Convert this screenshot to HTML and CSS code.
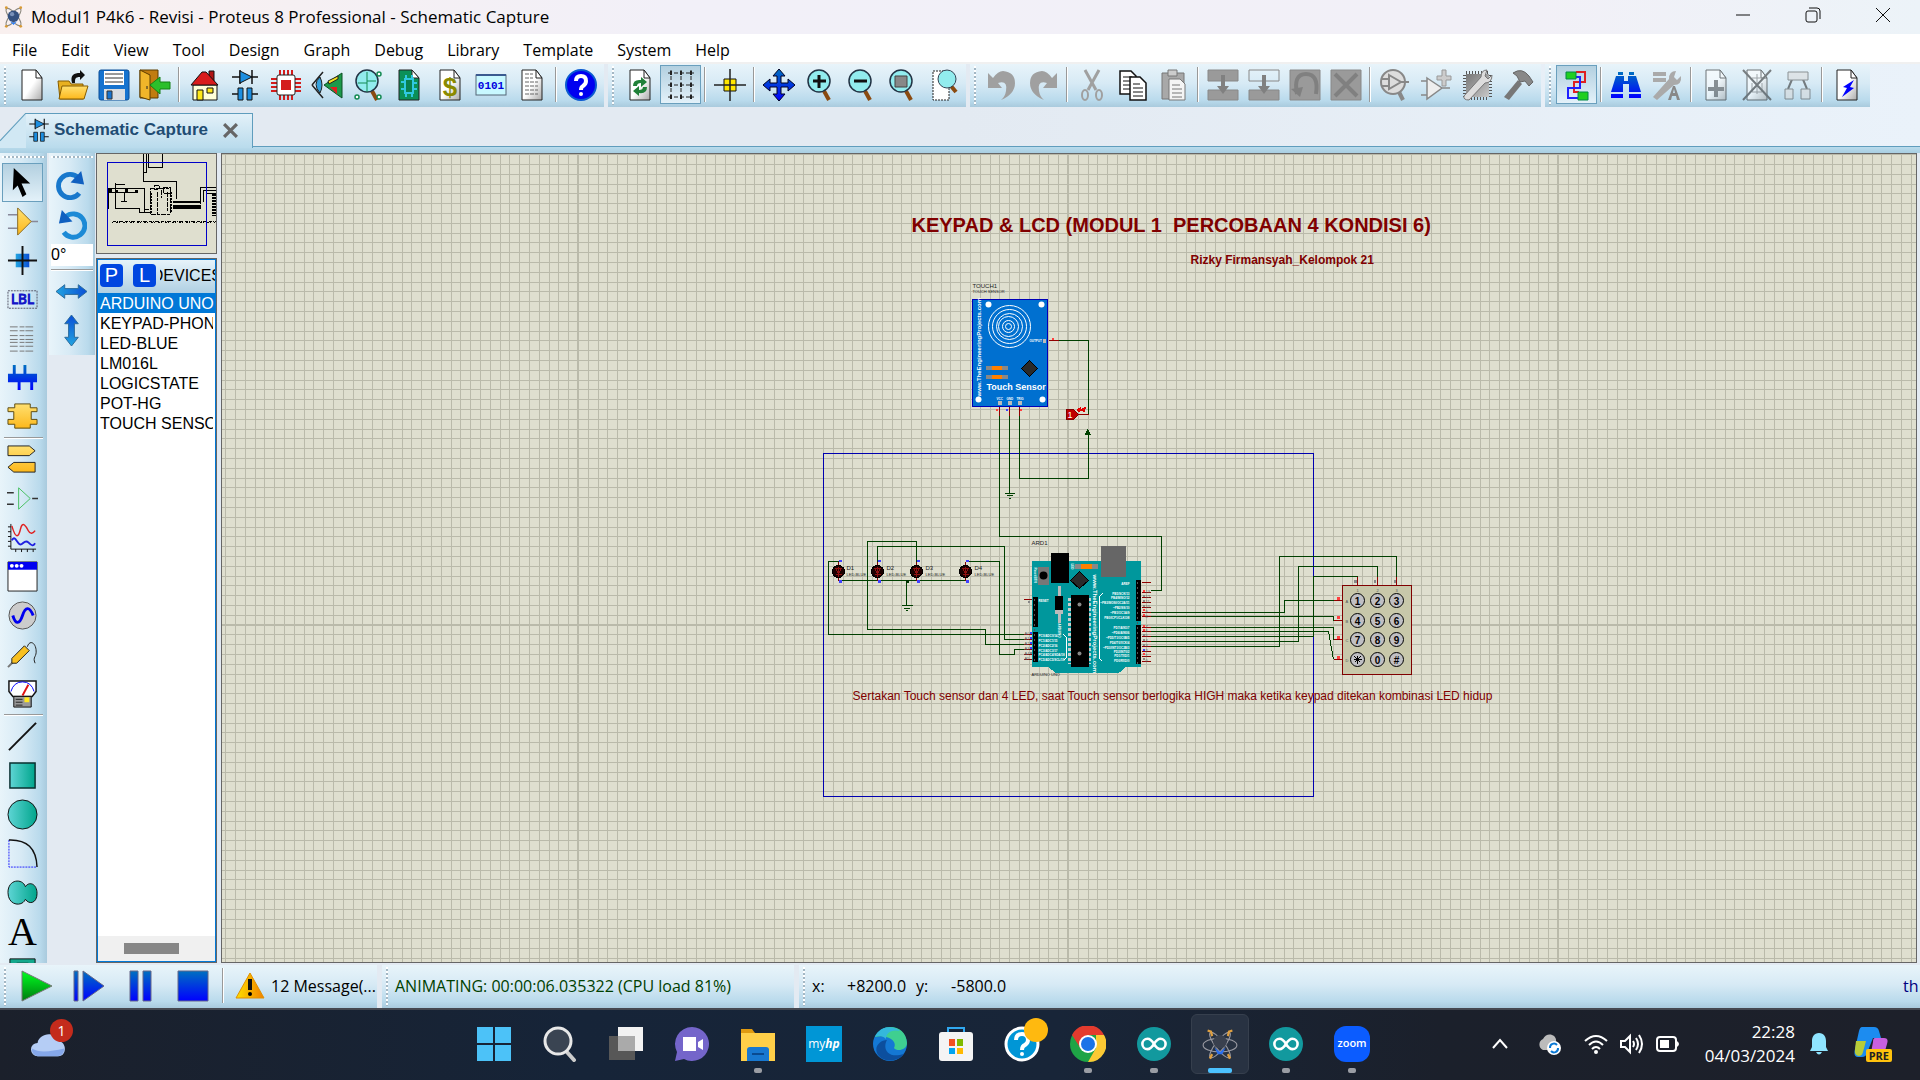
FILE: index.html
```html
<!DOCTYPE html>
<html lang="en">
<head>
<meta charset="utf-8">
<title>Modul1 P4k6 - Revisi - Proteus 8 Professional - Schematic Capture</title>
<link rel="stylesheet" href="styles.css">
</head>
<body>
<svg class="defs" aria-hidden="true">
  <defs>
    <linearGradient id="g-blue" x1="0" y1="0" x2="0" y2="1"><stop offset="0" stop-color="#0070c0"/><stop offset="1" stop-color="#0000ff"/></linearGradient>
    <linearGradient id="g-sky" x1="0" y1="0" x2="1" y2="0"><stop offset="0" stop-color="#22a4e0"/><stop offset="1" stop-color="#0a4fd6"/></linearGradient>
    <linearGradient id="g-yel" x1="0" y1="0" x2="0" y2="1"><stop offset="0" stop-color="#ffe070"/><stop offset="1" stop-color="#fcb81c"/></linearGradient>
    <linearGradient id="g-teal" x1="0" y1="0" x2="1" y2="0"><stop offset="0" stop-color="#5fd5d5"/><stop offset="1" stop-color="#00a58c"/></linearGradient>
    <linearGradient id="g-grn" x1="0" y1="0" x2="0" y2="1"><stop offset="0" stop-color="#00ff20"/><stop offset="1" stop-color="#007a10"/></linearGradient>
    <linearGradient id="g-page" x1="0" y1="0" x2="1" y2="1"><stop offset=".5" stop-color="#fff"/><stop offset="1" stop-color="#aaa"/></linearGradient>
    <linearGradient id="g-gray" x1="0" y1="0" x2="1" y2="1"><stop offset="0" stop-color="#777"/><stop offset="1" stop-color="#c8c8c8"/></linearGradient>
    <linearGradient id="g-warn" x1="0" y1="0" x2="1" y2="0"><stop offset="0" stop-color="#ffe000"/><stop offset="1" stop-color="#f08000"/></linearGradient>
    <symbol id="i-page" viewBox="0 0 32 32"><path d="M6 1h14l6 8v22H6z" fill="url(#g-page)" stroke="#222"/><path d="M20 1v8h6z" fill="#fff" stroke="#222"/></symbol>
    <symbol id="i-schem" viewBox="0 0 32 32"><path d="M3 8h26M11 1v14M23 1v14M3 25h9M20 25h9" stroke="#111" stroke-width="1.5"/><path d="M11 2l12 6-12 6z" fill="#1c8ee0" stroke="#111"/><path d="M9 19h5v12H9zM18 19h5v12h-5z" fill="#1c8ee0" stroke="#111"/></symbol>
    <symbol id="i-glass" viewBox="0 0 32 32"><path d="M20 22l5 9" stroke="#8a4a10" stroke-width="4"/><circle cx="15" cy="12" r="11" fill="#92ecee" stroke="#234" stroke-width="1.5"/></symbol>
    <symbol id="i-proteus" viewBox="0 0 32 32"><g fill="none" stroke-width="1.5"><ellipse cx="16" cy="16" rx="15" ry="5" transform="rotate(50 16 16)" stroke="#8d8a80"/><ellipse cx="16" cy="16" rx="15" ry="5" transform="rotate(-50 16 16)" stroke="#8d8a80"/></g><circle cx="16" cy="15" r="8" fill="#34507e"/><circle cx="14" cy="12" r="3" fill="#7890b8"/><path d="M11 22l5 5 5-5-5 2z" fill="#2b80ff"/><g fill="#d79a35"><circle cx="6" cy="3" r="2"/><circle cx="26" cy="3" r="2"/><circle cx="6" cy="29" r="2"/><circle cx="26" cy="29" r="2"/></g></symbol>
    <symbol id="i-orbit" viewBox="0 0 32 32"><g fill="none" stroke="#9a9aa2"><ellipse cx="16" cy="17" rx="15" ry="6"/><ellipse cx="16" cy="17" rx="14" ry="4" transform="rotate(52 16 17)"/><ellipse cx="16" cy="17" rx="14" ry="4" transform="rotate(-52 16 17)"/></g><circle cx="16" cy="14" r="6" fill="#39404e"/><path d="M11 19l5 4 5-4-3 6h-4z" fill="#2b70f0"/><path d="M5 4l3 1 1 4M27 4l-3 1-1 4M7 29l2-4M25 29l-2-4" stroke="#e0a040" stroke-width="2" fill="none"/></symbol>
    <symbol id="i-arduino" viewBox="0 0 36 36"><circle cx="18" cy="18" r="17" fill="#12999e"/><path d="M18 18c-3-5-5-6-7.500-6a6 6 0 0 0 0 12c3 0 5-2 7.500-6s5-6 7.500-6a6 6 0 0 1 0 12c-3 0-5-2-7.500-6z" transform="translate(2.500 2.500) scale(.86)" fill="none" stroke="#fff" stroke-width="3"/></symbol>
    <symbol id="i-led" viewBox="-7 -12 14 24" overflow="visible"><path d="M0-10V9" stroke="#800000"/><circle r="6" fill="#1c0000" stroke="#000"/><path d="M-3-3h6l-3 5zM-3 3h6M0-5v10" stroke="#901010" fill="none"/><path d="M0-12h3v2H0zM0 8h3v3H0z" fill="#4040ff"/></symbol>
  </defs>
</svg>

<div class="app">
  <header class="titlebar">
    <svg class="logo" viewBox="0 0 32 32"><use href="#i-proteus"/></svg>
    <h1>Modul1 P4k6 - Revisi - Proteus 8 Professional - Schematic Capture</h1>
    <div class="winctl">
      <button aria-label="Minimize"><svg viewBox="0 0 16 16"><path d="M1 8h14"/></svg></button>
      <button aria-label="Restore"><svg viewBox="0 0 16 16"><rect x="1" y="4" width="11" height="11" rx="2"/><path d="M4 1h8q3 0 3 3v8"/></svg></button>
      <button aria-label="Close"><svg viewBox="0 0 16 16"><path d="M1 1l14 14M15 1L1 15"/></svg></button>
    </div>
  </header>

  <nav class="menubar">
    <button>File</button><button>Edit</button><button>View</button><button>Tool</button><button>Design</button><button>Graph</button><button>Debug</button><button>Library</button><button>Template</button><button>System</button><button>Help</button>
  </nav>

  <div class="toolbar">
    <div class="group">
      <button aria-label="New"><svg viewBox="0 0 32 32"><use href="#i-page"/></svg></button>
      <button aria-label="Open"><svg viewBox="0 0 32 32"><path d="M1 12h11l2 3h12v15H3z" fill="#e8b020" stroke="#865c00"/><path d="M5 17h26l-4 13H2z" fill="url(#g-yel)" stroke="#865c00"/><path d="M15 14c-2-8 2-10 8-10V1l5 5-5 5V8c-5 0-5 2-5 6z" fill="#111"/></svg></button>
      <button aria-label="Save"><svg viewBox="0 0 32 32"><rect x="1" y="1" width="30" height="30" rx="2" fill="#1673cf" stroke="#0a4c96"/><path d="M6 2h20v14H6z" fill="#fff"/><path d="M7 5h18M7 9h18M7 13h18" stroke="#333"/><path d="M6 20h21v11H6z" fill="#d9dde2"/><path d="M9 22h5v8H9z" fill="#1673cf" stroke="#333"/></svg></button>
      <button aria-label="Exit"><svg viewBox="0 0 32 32"><path d="M1 1h18v28H1z" fill="#c07c10" stroke="#5d3c00"/><path d="M1 1l10 5v25L1 28z" fill="#f0b52a" stroke="#5d3c00"/><path d="M8 17v3" stroke="#222"/><path d="M11 16l10-8v5h10v7H21v5z" fill="#2bbf2b" stroke="#158015"/></svg></button>
      <i class="sep"></i>
      <button aria-label="Home"><svg viewBox="0 0 32 32"><path d="M21 2h5v13h-5z" fill="#b01414" stroke="#111"/><path d="M5 16h24v15H5z" fill="#ffffd8" stroke="#111"/><path d="M3 16L14 3l4 0 12 13z" fill="#d81c1c" stroke="#111"/><path d="M9 21h6v10H9zM19 19h6v5h-6z" fill="#ffe818" stroke="#111"/></svg></button>
      <button aria-label="Schematic"><svg viewBox="0 0 32 32"><use href="#i-schem"/></svg></button>
      <button aria-label="PCB"><svg viewBox="0 0 32 32"><path d="M10 1v30M14 1v30M18 1v30M22 1v30M1 10h30M1 14h30M1 18h30M1 22h30" stroke="#d41c1c" stroke-width="2"/><rect x="7" y="6" width="18" height="20" rx="2" fill="#fff" stroke="#222"/><path d="M11 11h10v10H11z" fill="#d41c1c"/></svg></button>
      <button aria-label="3D view"><svg viewBox="0 0 32 32"><path d="M13 16L31 4v25z" fill="#1d9a4a" stroke="#0c5024"/><path d="M17 12l10-5v3l-9 5z" fill="#f4e020" stroke="#222"/><path d="M19 18l7 0v7z" fill="#e02020"/><path d="M1 16L12 3M1 16l11 13" stroke="#222" stroke-width="1.500" fill="none"/><path d="M9 8q-8 7 0 16 4-8 0-16z" fill="#36a2de" stroke="#222"/></svg></button>
      <button aria-label="Gerber"><svg viewBox="0 0 32 32"><use href="#i-glass"/><path d="M6 14h9V3M15 14v9M15 12h9" stroke="#138a52" fill="none"/><g fill="#fff" stroke="#138a52" stroke-width="1.500"><circle cx="27" cy="5" r="2"/><circle cx="5" cy="28" r="2"/><circle cx="27" cy="28" r="2"/></g></svg></button>
      <button aria-label="Design explorer"><svg viewBox="0 0 32 32"><path d="M6 1h13l7 8v22H6z" fill="#0b9058" stroke="#222"/><path d="M19 1v8h7z" fill="#fff" stroke="#222"/><path d="M12 10h8v14h-8zM13 10V6M19 10V6M13 24v4M19 24v4M12 13H8M12 20H8M20 14h4M20 20h4" fill="#088050" stroke="#30c8e0" stroke-width="2"/></svg></button>
      <button aria-label="Bill of materials"><svg viewBox="0 0 32 32"><use href="#i-page"/><text x="16" y="27" class="bill">$</text></svg></button>
      <button aria-label="Source"><svg viewBox="0 0 32 32"><rect x="1" y="6" width="30" height="20" fill="#c8f8ff" stroke="#567"/><path d="M1 5h30v2H1z" fill="#3a5a90"/><text x="16" y="20" class="code">0101</text></svg></button>
      <button aria-label="Notes"><svg viewBox="0 0 32 32"><use href="#i-page"/><path d="M9 5h8M9 9h8M9 13h13M9 17h13M9 21h13M9 25h13" stroke="#666" stroke-dasharray="4 1"/></svg></button>
      <i class="sep"></i>
      <button aria-label="Help"><svg viewBox="0 0 32 32"><circle cx="16" cy="16" r="15" fill="#0000f0" stroke="#0a5ad0" stroke-width="2"/><path d="M11 12q0-5 5-5t5 5q0 3-3 5-2 1-2 4" fill="none" stroke="#fff" stroke-width="4"/><circle cx="16" cy="25" r="2" fill="#fff"/></svg></button>
    </div>
    <div class="group">
      <button aria-label="Redraw"><svg viewBox="0 0 32 32"><use href="#i-page"/><path d="M9 17q0-7 8-6V8l6 5-6 5v-4q-4 0-4 3zM23 18q0 7-8 6v3l-6-5 6-5v4q4 0 4-3z" fill="#208038"/></svg></button>
      <button class="on" aria-label="Grid"><svg viewBox="0 0 32 32"><path d="M6 1v30M16 1v30M26 1v30M3 4h26M3 16h26M3 28h26" stroke="#222" stroke-dasharray="4 2"/><path d="M6 2v4M16 2v4M26 2v4M6 14v4M16 14v4M26 14v4M6 26v4M16 26v4M26 26v4" stroke="#222" stroke-width="2"/></svg></button>
      <i class="sep"></i>
      <button aria-label="Origin"><svg viewBox="0 0 32 32"><path d="M10 10h12v12H10z" fill="#ffe600" stroke="#111"/><path d="M0 16h32M16 0v32" stroke="#222" stroke-width="1.500"/></svg></button>
      <i class="sep"></i>
      <button aria-label="Pan"><svg viewBox="0 0 32 32"><path d="M16 0l6 7h-4v7h7v-4l7 6-7 6v-4h-7v7h4l-6 7-6-7h4v-7H7v4l-7-6 7-6v4h7V7h-4z" fill="url(#g-blue)" stroke="#002"/></svg></button>
      <button aria-label="Zoom in"><svg viewBox="0 0 32 32"><use href="#i-glass"/><path d="M9 12h13M15 6v13" stroke="#111" stroke-width="3"/></svg></button>
      <button aria-label="Zoom out"><svg viewBox="0 0 32 32"><use href="#i-glass"/><path d="M9 12h13" stroke="#111" stroke-width="3"/></svg></button>
      <button aria-label="Zoom all"><svg viewBox="0 0 32 32"><use href="#i-glass"/><path d="M9 7h12v11H9z" fill="#888" stroke="#444"/></svg></button>
      <button aria-label="Zoom area"><svg viewBox="0 0 32 32"><path d="M6 2h16v29H6z" fill="#fff" stroke="#222" stroke-dasharray="2 1"/><path d="M24 17l5 6" stroke="#8a4a10" stroke-width="4"/><circle cx="20" cy="10" r="9" fill="#92ecee" stroke="#345"/></svg></button>
    </div>
    <div class="group">
      <button aria-label="Undo"><svg viewBox="0 0 32 32"><path d="M2 4v15h14l-4-5q10-3 8 8-1 6-5 9 14-6 14-17T17 2Q12 2 7 9z" fill="#a0a0a0"/></svg></button>
      <button aria-label="Redo"><svg viewBox="0 0 32 32"><path d="M30 4v15H16l4-5q-10-3-8 8 1 6 5 9Q3 25 3 14T15 2q5 0 10 7z" fill="#a0a0a0"/></svg></button>
      <i class="sep"></i>
      <button aria-label="Cut"><svg viewBox="0 0 32 32" fill="none" stroke="#a0a0a0"><path d="M9 1l11 20M23 1L12 21" stroke-width="3"/><ellipse cx="9" cy="26" rx="3" ry="5" stroke-width="2"/><ellipse cx="23" cy="26" rx="3" ry="5" stroke-width="2"/></svg></button>
      <button aria-label="Copy"><svg viewBox="0 0 32 32"><path d="M3 2h11l5 5v18H3z" fill="#fff" stroke="#111" stroke-width="1.500"/><path d="M6 8h9M6 12h9M6 16h9M6 20h9" stroke="#111"/><path d="M13 8h10l6 6v17H13z" fill="#fff" stroke="#111" stroke-width="1.500"/><path d="M16 15h7M16 19h10M16 23h10M16 27h10" stroke="#111"/></svg></button>
      <button aria-label="Paste"><svg viewBox="0 0 32 32"><path d="M4 4h22v26H4z" fill="#a8a8a8" stroke="#777"/><path d="M10 1h9v6h-9z" fill="#ccc" stroke="#777"/><path d="M11 10h11l5 5v16H11z" fill="#f4f4f4" stroke="#777"/><path d="M14 16h8M14 20h10M14 24h10M14 28h10" stroke="#777"/></svg></button>
      <i class="sep"></i>
      <button aria-label="Block copy"><svg viewBox="0 0 32 32"><path d="M1 1h30v11H1zM1 21h30v10H1z" fill="#9a9a9a" stroke="#888"/><path d="M14 6h4v11h4l-6 8-6-8h4z" fill="#808080"/></svg></button>
      <button aria-label="Block move"><svg viewBox="0 0 32 32"><path d="M1 1h30v11H1z" fill="none" stroke="#888"/><path d="M1 21h30v10H1z" fill="#9a9a9a" stroke="#888"/><path d="M14 6h4v11h4l-6 8-6-8h4z" fill="#808080"/></svg></button>
      <button aria-label="Block rotate"><svg viewBox="0 0 32 32"><path d="M1 1h30v30H1z" fill="#9a9a9a" stroke="#888"/><path d="M8 25q-4-20 9-20t10 20" fill="none" stroke="#808080" stroke-width="4"/><path d="M2 20l9 8 3-10z" fill="#808080"/></svg></button>
      <button aria-label="Block delete"><svg viewBox="0 0 32 32"><path d="M1 1h30v30H1z" fill="#9a9a9a" stroke="#888"/><path d="M5 5l22 22M27 5L5 27" stroke="#808080" stroke-width="4"/></svg></button>
      <i class="sep"></i>
      <button aria-label="Pick parts"><svg viewBox="0 0 32 32" fill="none" stroke="#888" stroke-width="2"><path d="M20 23l4 8" stroke-width="4"/><circle cx="14" cy="13" r="12" fill="#ddd"/><path d="M10 6l12 7-12 7zM2 10h8M2 17h8M22 13h8"/></svg></button>
      <button aria-label="Make device"><svg viewBox="0 0 32 32"><path d="M7 9l15 10L7 30zM1 12h6M1 26h6M22 19h8" fill="#eee" stroke="#888" stroke-width="1.500"/><path d="M22 1h4v6h5v4h-5v6h-4v-6h-5V7h5z" fill="#ccc" stroke="#999"/></svg></button>
      <button aria-label="Packaging"><svg viewBox="0 0 32 32"><path d="M5 5h23v23H5z" fill="none" stroke="#555" stroke-width="6" stroke-dasharray="1 2"/><path d="M5 5h23v23H5z" fill="url(#g-gray)"/><path d="M3 27L20 8q0-7 6-7l-2 6 3 3 4-4q0 8-7 8L8 31q-6 0-5-4z" fill="#ddd" stroke="#777"/></svg></button>
      <button aria-label="Decompose"><svg viewBox="0 0 32 32"><path d="M16 11l4 4L7 31l-5-3z" fill="#777"/><path d="M11 4q9-6 16 3l4 6-4 4-4-5-5 1-3-6z" fill="#888" stroke="#666"/></svg></button>
    </div>
    <div class="group">
      <button class="on" aria-label="Autoroute"><svg viewBox="0 0 32 32"><path d="M15 3h9v10h-11v10h5" fill="none" stroke="#e02020" stroke-width="2"/><path d="M13 8h6v11H7v10h12" fill="none" stroke="#2020ff" stroke-width="2"/><path d="M5 3h10v7H5zM17 23h10v8H17z" fill="#20cf20" stroke="#084"/></svg></button>
      <i class="sep"></i>
      <button aria-label="Find"><svg viewBox="0 0 32 32" fill="url(#g-blue)"><path d="M8 3h5v3H8zM19 3h5v3h-5zM6 7h8v5h4V7h8l5 16H19v-8h-6v8H1zM1 25h12v4H1zM19 25h12v4H19z"/></svg></button>
      <button aria-label="Property tool"><svg viewBox="0 0 32 32"><path d="M2 3h13v4H2zM2 9h13v4H2z" fill="#aaa"/><path d="M2 28L18 10q0-8 7-8l-2 6 3 3 4-4q1 9-7 9L6 31z" fill="#aaa"/><path d="M17 31l5-14h2l5 14h-3l-1-4h-4l-1 4zM22 24h2l-1-4z" fill="#888"/></svg></button>
      <i class="sep"></i>
      <button aria-label="New sheet"><svg class="dim" viewBox="0 0 32 32"><use href="#i-page"/><path d="M16 11v17M8 20h16" stroke="#555" stroke-width="4"/></svg></button>
      <button aria-label="Remove sheet"><svg class="dim" viewBox="0 0 32 32"><use href="#i-page"/><path d="M16 5v20M11 9h10M11 14v9h10v-9" stroke="#777" fill="none"/><path d="M2 1l28 30M30 1L2 31" stroke="#333" stroke-width="2"/></svg></button>
      <button aria-label="Parent sheet"><svg class="dim" viewBox="0 0 32 32"><path d="M11 8L6 20M20 8l5 12" stroke="#333" stroke-width="2"/><path d="M6 3h20v8H6zM3 20h8v10H3zM19 20h9v10h-9z" fill="#ddd" stroke="#555"/></svg></button>
      <i class="sep"></i>
      <button aria-label="Electrical check"><svg viewBox="0 0 32 32"><use href="#i-page"/><path d="M23 11l-11 7 4 1-5 9 12-9-4-1z" fill="#0000ff"/></svg></button>
    </div>
  </div>

  <div class="tabs">
    <svg class="slant" viewBox="0 0 26 34" preserveAspectRatio="none"><path d="M0 27L26 0v34H0z" fill="#d1e8f4"/><path d="M0 27L26 0" stroke="#5f9dbd"/></svg>
    <div class="tab"><svg viewBox="0 0 32 32"><use href="#i-schem"/></svg><span>Schematic Capture</span><button aria-label="Close tab"><svg viewBox="0 0 14 14"><path d="M1 1l12 12M13 1L1 13" stroke="#666" stroke-width="3"/></svg></button></div>
  </div>

  <main class="work">
    <div class="tools modes">
      <button class="on" aria-label="Select"><svg viewBox="0 0 32 32"><path d="M7 1l17 16h-9l5 11-4 3-5-12-5 5z" fill="#000"/></svg></button>
      <button aria-label="Component"><svg viewBox="0 0 32 32"><path d="M1 9h10M1 23h10M25 16h7" stroke="#889" stroke-width="1.500"/><path d="M11 2l14 14-14 14z" fill="url(#g-yel)" stroke="#8a6a20"/></svg></button>
      <button aria-label="Junction"><svg viewBox="0 0 32 32"><path d="M9 9h14v14H9z" fill="url(#g-sky)"/><path d="M1 16h30M16 1v30" stroke="#111" stroke-width="2"/></svg></button>
      <button aria-label="Label"><svg viewBox="0 0 32 32"><path d="M1 7h30v18H1z" fill="none" stroke="#556" stroke-dasharray="2 1"/><text x="16" y="21" class="lbl">LBL</text></svg></button>
      <button aria-label="Script"><svg viewBox="0 0 32 32"><path d="M3 4h26M3 8h26M3 13h26M3 17h26M3 20h26M3 24h26M3 29h26" stroke="#777" stroke-dasharray="8 2 5 1"/></svg></button>
      <button aria-label="Bus"><svg viewBox="0 0 32 32" fill="url(#g-blue)"><path d="M1 12h5V3h3v9h8V3h3v9h11v9h-4v8h-3v-8H14v8h-3v-8H1z"/></svg></button>
      <button aria-label="Subcircuit"><svg viewBox="0 0 32 32"><path d="M8 3h16v4h7v4h-6v8h6v5h-7v4H8v-4H1v-5h6v-8H1V7h7z" fill="url(#g-yel)" stroke="#5d4a10"/></svg></button>
      <i class="sep"></i>
      <button aria-label="Terminals"><svg viewBox="0 0 32 32"><path d="M1 2h22l6 5-6 5H1zM29 19H7l-6 5 6 5h22z" fill="url(#g-yel)" stroke="#222"/></svg></button>
      <button aria-label="Pins"><svg viewBox="0 0 32 32"><path d="M0 10h7M0 22h7M26 16h6" stroke="#333" stroke-width="1.500"/><path d="M12 5l12 11-12 11z" fill="none" stroke="#46c060"/></svg></button>
      <button aria-label="Graph"><svg viewBox="0 0 32 32" fill="none"><path d="M4 2v26h26M1 5h3M1 10h3M1 15h3M1 20h3M1 25h3M9 28v3M15 28v3M21 28v3M27 28v3" stroke="#111"/><path d="M5 4c4 14 7 12 9 3s6-2 8 2 5 3 7 0" stroke="#e02020" stroke-width="1.500"/><path d="M5 19c3-6 5 2 8 4s5-6 9-2 5 4 7 1" stroke="#2020e0" stroke-width="2"/></svg></button>
      <button aria-label="Active popup"><svg viewBox="0 0 32 32"><path d="M1 1h30v30H1z" fill="#fff" stroke="#222"/><path d="M1 1h30v8H1z" fill="#0000f0"/><g fill="#fff"><circle cx="5" cy="5" r="2"/><circle cx="10" cy="5" r="2"/><circle cx="15" cy="5" r="2"/></g></svg></button>
      <button aria-label="Generator"><svg viewBox="0 0 32 32"><circle cx="16" cy="16" r="14" fill="#ccc" stroke="#555"/><path d="M6 16c3 10 7 9 10 0s7-10 11 0" fill="none" stroke="#0000f0" stroke-width="3"/></svg></button>
      <button aria-label="Probe"><svg viewBox="0 0 32 32"><path d="M1 29l5-5" stroke="#777" stroke-width="2"/><path d="M5 20L18 7l5 5L10 25H5z" fill="#f8c020" stroke="#222"/><path d="M21 8c2-7 8-5 9 3s-4 7-1 14" fill="none" stroke="#222"/></svg></button>
      <button aria-label="Instruments"><svg viewBox="0 0 32 32"><path d="M2 3h28v11l-4 5H6l-4-5z" fill="#fff" stroke="#111" stroke-width="1.500"/><path d="M4 14q3-10 12-10t12 10" fill="none" stroke="#0000ff"/><path d="M16 18l6-11" stroke="#e01010" stroke-width="2"/><path d="M7 19h18v11H7z" fill="#999" stroke="#111"/><path d="M18 20h5v5h-5z" fill="#ffe820"/><path d="M9 22h7M9 25h7M9 28h7" stroke="#222"/></svg></button>
      <i class="sep"></i>
      <button aria-label="Line"><svg viewBox="0 0 32 32"><path d="M2 30L30 2" stroke="#111" stroke-width="2"/></svg></button>
      <button aria-label="Box"><svg viewBox="0 0 32 32"><path d="M3 3h26v26H3z" fill="url(#g-teal)" stroke="#0a3030" stroke-width="1.500"/></svg></button>
      <button aria-label="Circle"><svg viewBox="0 0 32 32"><circle cx="16" cy="16" r="15" fill="url(#g-teal)" stroke="#111"/></svg></button>
      <button aria-label="Arc"><svg viewBox="0 0 32 32" fill="none"><path d="M2 2v28h29" stroke="#2020ff" stroke-dasharray="2 1"/><path d="M2 2q28-1 29 28" stroke="#111" stroke-width="1.500"/></svg></button>
      <button aria-label="Path"><svg viewBox="0 0 32 32"><path d="M19 10C16 1 1 2 1 16s15 15 18 7c4 6 12 4 12-6s-8-13-12-7z" fill="url(#g-teal)" stroke="#111"/></svg></button>
      <button class="serif" aria-label="Text">A</button>
      <button aria-label="Symbol"><svg viewBox="0 0 32 32"><path d="M3 4h26v26H3z" fill="#14a88c" stroke="#111"/><path d="M11 9h10v8H11z" fill="none" stroke="#111" stroke-width="2"/></svg></button>
    </div>

    <div class="tools orient">
      <button aria-label="Rotate clockwise"><svg viewBox="0 0 32 32"><path d="M24 24A12 12 0 1 1 23 8" fill="none" stroke="#1878cc" stroke-width="5"/><path d="M26 1l3 14-14-2z" fill="#1060c0"/></svg></button>
      <button aria-label="Rotate anticlockwise"><svg viewBox="0 0 32 32"><path d="M8 24A12 12 0 1 0 10 8" fill="none" stroke="#1c8ad6" stroke-width="5"/><path d="M6 1L3 15l14-2z" fill="#1060c0"/></svg></button>
      <input value="0°" aria-label="Angle">
      <i class="sep"></i>
      <button aria-label="Flip horizontal"><svg viewBox="0 0 32 32"><path d="M0 16l9-7v4h14V9l9 7-9 7v-4H9v4z" fill="url(#g-sky)" stroke="#2a6a9a"/></svg></button>
      <button aria-label="Flip vertical"><svg viewBox="0 0 32 32"><path d="M0 16l9-7v4h14V9l9 7-9 7v-4H9v4z" fill="url(#g-sky)" stroke="#2a6a9a" transform="rotate(-90 16 16)"/></svg></button>
    </div>

    <aside class="side">
      <div class="overview">
        <svg viewBox="0 0 119 99"><g fill="none" stroke="#000" shape-rendering="crispEdges"><path d="M46 0v27h33v18M49 0v18M47 18h3M51 0v13h14V0M11 34h36v21h5M18 30h10M18 29v25h24v4h10M11 34v21M11 38h30M27 39v8M24 47h6M47 50v8h6"/><path d="M76 48h27M76 52h28M76 54h28" stroke-width="2"/><path d="M103 50V33h17M106 48V36h14M109 46v-7h10"/><path d="M53 34h20v26H53zM57 31h5v4h-5zM66 33h7v6h-7zM60 38v22M64 36v8M70 38v20" stroke-dasharray="5 1 3 1"/><path d="M54 39v20M74 38v20" stroke-width="2" stroke-dasharray="2 1"/><path d="M117 40v22" stroke-width="4" stroke-dasharray="2 1"/><path d="M16 67h103" stroke-dasharray="3 1 1 1 4 2"/><path d="M15 68h103" stroke-dasharray="1 3 2 1"/><path d="M12 36h3M18 37h3M28 36h3M38 37h3" stroke-width="3"/></g><path d="M10 8h99v83H10z" fill="none" stroke="#0000c8" shape-rendering="crispEdges"/></svg>
      </div>
      <div class="devices">
        <div class="dev-head"><button>P</button><button>L</button><span>DEVICES</span></div>
        <ul>
          <li class="sel">ARDUINO UNO</li><li>KEYPAD-PHONE</li><li>LED-BLUE</li><li>LM016L</li><li>LOGICSTATE</li><li>POT-HG</li><li>TOUCH SENSOR</li>
        </ul>
        <div class="hscroll"><i></i></div>
      </div>
    </aside>

    <section class="sheet">
      <svg width="100%" height="100%" role="img" aria-label="Schematic">
        <defs>
          <pattern id="grid" x="13" y="30" width="49" height="49" patternUnits="userSpaceOnUse"><path d="M0 0h1v49H0zM10 0h1v49h-1zM20 0h1v49h-1zM29 0h1v49h-1zM39 0h1v49h-1zM0 0h49v1H0zM0 9h49v1H0zM0 19h49v1H0zM0 29h49v1H0zM0 39h49v1H0z" fill="#babaaa"/></pattern>
        </defs>
        <rect width="100%" height="100%" fill="url(#grid)"/>
        <g fill="#babaaa"><rect x="355" width="2" height="100%"/><rect x="845" width="2" height="100%"/><rect x="1335" width="2" height="100%"/><rect y="470" width="100%" height="2"/></g>
        <g transform="translate(-221.500 -153.500)">
          <path class="frame" d="M823 453h490v343H823z"/>
          <g class="wire">
            <path d="M1058 340h30v74M999 415v121h162v54h-11M1009 415v78M1019 415v63h69v-44M1004 493h10M1006 495h6M1008 498h2"/>
            <path d="M838 561h-10v73h195M916 561v-20h-49v88h118v15h38M877 561v-15h127v93h19M965 561h34v93h15v-5h9M838 580h129M906 580v25M901 605h11M903 608h6M905 610h2"/>
            <path d="M1150 612h134v-12h49M1150 616h183v4M1150 627h183v12M1150 631h178l5 28M1150 636h163v-60h44M1150 641h148v-75h79v10M1150 646h129v-90h117v20"/>
          </g>
          <path d="M1087 428l-3 6h6z" fill="#004000"/><path d="M905 579h3v3h-3z" fill="#003000"/>
          <g class="pin">
            <path d="M1048 340h10M999 403v12M1009 403v12M1019 403v12M1078 414h10"/>
            <path d="M1023 599h9M1023 634h9M1023 639h9M1023 644h9M1023 649h9M1023 654h9M1023 659h9"/>
            <path d="M1141 582h9M1141 592h9M1141 597h9M1141 602h9M1141 607h9M1141 612h9M1141 616h9M1141 627h9M1141 631h9M1141 636h9M1141 641h9M1141 646h9M1141 651h9M1141 656h9M1141 661h9"/>
            <path d="M1333 600h9M1333 620h9M1333 639h9M1333 659h9M1357 576v9M1377 576v9M1396 576v9"/>
          </g>
          <text class="ttl" x="911" y="231">KEYPAD &amp; LCD (MODUL 1&#160; PERCOBAAN 4 KONDISI 6)</text>
          <text class="sub" x="1190" y="263">Rizky Firmansyah_Kelompok 21</text>
          <text class="note" x="852" y="699">Sertakan Touch sensor dan 4 LED, saat Touch sensor berlogika HIGH maka ketika keypad ditekan kombinasi LED hidup</text>

          <!-- touch sensor board -->
          <text class="ref" x="972" y="287">TOUCH1</text><text class="val" x="972" y="292">TOUCH SENSOR</text>
          <path d="M972 299h75v107h-75z" fill="#0070d0" stroke="#0000b8"/>
          <g fill="#fff"><circle cx="988" cy="304" r="3"/><circle cx="1041" cy="304" r="3"/><circle cx="978" cy="399" r="3"/><circle cx="1042" cy="399" r="3"/></g>
          <g fill="none" stroke="#fff"><circle cx="1009" cy="326" r="21"/><circle cx="1009" cy="326" r="17"/><circle cx="1009" cy="326" r="13"/><circle cx="1008" cy="326" r="10"/><circle cx="1008" cy="326" r="6"/><circle cx="1008" cy="326" r="3"/></g>
          <path d="M985 365h22v4h-22zM985 374h22v4h-22z" fill="#888"/><path d="M991 365h10v4h-10zM991 374h10v4h-10z" fill="#ff8000"/>
          <path d="M1029 360l8 8-8 8-8-8z" fill="#2a2a2a" stroke="#000"/>
          <text class="site" transform="translate(980 396) rotate(-90)">www.TheEngineeringProjects.com</text>
          <text class="board" x="986" y="389">Touch Sensor</text>
          <text class="tiny" x="1029" y="341">OUTPUT</text><text class="tiny" x="996" y="399">VCC</text><text class="tiny" x="1006" y="399">GND</text><text class="tiny" x="1016" y="399">TRIG</text>
          <path d="M1042 338h3v4h-3zM997 400h4v4h-4zM1007 400h4v4h-4zM1017 400h4v4h-4z" fill="#bbb"/>
          <path d="M1051 337h2v2h-2zM995 408h2v2h-2zM1019 408h2v2h-2z" fill="#ff4040"/><path d="M1005 408h2v2h-2z" fill="#4040ff"/>
          <path d="M1066 409h7l5 5-5 5h-7z" fill="#c00000" stroke="#800000"/><text class="one" x="1067" y="417">1</text>
          <path d="M1077 409l3-2 1 3-3 1zM1082 408l3-1-1 4-2-1z" fill="#f00" stroke="#d00"/>

          <!-- LEDs -->
          <use href="#i-led" x="831" y="559" width="14" height="24"/><use href="#i-led" x="870" y="559" width="14" height="24"/><use href="#i-led" x="909" y="559" width="14" height="24"/><use href="#i-led" x="958" y="559" width="14" height="24"/>
          <text class="ref" x="846" y="569">D1</text><text class="ref" x="886" y="569">D2</text><text class="ref" x="925" y="569">D3</text><text class="ref" x="974" y="569">D4</text>
          <text class="val" x="846" y="575">LED-BLUE</text><text class="val" x="886" y="575">LED-BLUE</text><text class="val" x="925" y="575">LED-BLUE</text><text class="val" x="974" y="575">LED-BLUE</text>

          <!-- Arduino Uno -->
          <g transform="translate(-1 -1)">
          <text class="ref" x="1032" y="545">ARD1</text><text class="val" x="1032" y="676">ARDUINO UNO</text>
          <path d="M1032 561h109v106h-14l-7 6h-64l-8-6h-16z" fill="#00979c"/>
          <path d="M1101 546h25v31h-25z" fill="#666"/><path d="M1051 553h18v30h-18z" fill="#000"/>
          <path d="M1038 567h11v18h-11z" fill="#777"/><circle cx="1044" cy="576" r="4"/>
          <path d="M1075 564h23v5h-23z" fill="#888"/><path d="M1081 564h11v5h-11z" fill="#ff8000"/>
          <path d="M1080 572l9 9-9 8-9-8z" fill="#2a2a2a" stroke="#000"/>
          <path d="M1058 586h3v37h-3z" fill="#bbb"/><path d="M1055 596h8v14h-8z"/><path d="M1055 610h8v4h-8z" fill="#bbb"/>
          <path d="M1070 598v66M1090 598v66" stroke="#ccc" stroke-width="3" stroke-dasharray="3 2"/><path d="M1071 595h18v72h-18z"/><g fill="#888"><circle cx="1080" cy="605" r="2"/><circle cx="1080" cy="654" r="2"/></g>
          <path d="M1033 597h5v30h-5zM1033 632h5v30h-5zM1136 580h5v41h-5zM1136 625h5v39h-5z"/>
          <path d="M1035 599v62M1138 582v82" stroke="#555" stroke-dasharray="2 3"/>
          <path d="M1103 594l-3 3v62l3 3M1064 635l3 3v20l-3 3" fill="none" stroke="#fff"/>
          <text class="site" transform="translate(1093 575) rotate(90)">www.TheEngineeringProjects.com</text>
          <text class="tiny" transform="translate(1034 568) rotate(90)">Reset BTN</text><text class="tiny" transform="translate(1058 624) rotate(90)">ARDUINO</text><text class="tiny" transform="translate(1071 564) rotate(90)">LED</text>
          <text class="tiny" x="1039" y="602">RESET</text>
          <g class="tiny"><text x="1039" y="637">PC0/ADC0/14</text><text x="1039" y="642">PC1/ADC1/15</text><text x="1039" y="647">PC2/ADC2/16</text><text x="1039" y="652">PC3/ADC3/17</text><text x="1039" y="656">PC4/ADC4/SDA/18</text><text x="1039" y="661">PC5/ADC5/SCL/19</text></g>
          <g class="tiny end"><text x="1130" y="585">AREF</text><text x="1130" y="595">PB5/SCK/13</text><text x="1130" y="599">PB4/MISO/12</text><text x="1130" y="604">~PB3/MOSI/OC2A/11</text><text x="1130" y="609">~PB2/SS/10</text><text x="1130" y="614">~PB1/OC1A/9</text><text x="1130" y="619">PB0/ICP1/CLKO/8</text><text x="1130" y="629">PD7/AIN1/7</text><text x="1130" y="634">~PD6/AIN0/6</text><text x="1130" y="639">~PD5/T1/OC0B/5</text><text x="1130" y="644">PD4/T0/XCK/4</text><text x="1130" y="649">~PD3/INT1/OC2B/3</text><text x="1130" y="653">PD2/INT0/2</text><text x="1130" y="657">PD1/TXD/1</text><text x="1130" y="662">PD0/RXD/0</text></g>
          </g>
          <g class="num"><text x="1024" y="634">A0</text><text x="1024" y="639">A1</text><text x="1024" y="644">A2</text><text x="1024" y="649">A3</text><text x="1024" y="654">A4</text><text x="1024" y="659">A5</text><text x="1145" y="592">13</text><text x="1145" y="597">12</text><text x="1145" y="602">11</text><text x="1145" y="607">10</text><text x="1145" y="612">9</text><text x="1145" y="617">8</text><text x="1145" y="627">7</text><text x="1145" y="631">6</text><text x="1145" y="636">5</text><text x="1145" y="641">4</text><text x="1145" y="646">3</text><text x="1145" y="651">2</text><text x="1145" y="656">1</text><text x="1145" y="661">0</text></g>
          <path d="M1142 589h2v2h-2zM1142 608h2v2h-2zM1142 613h2v2h-2zM1142 624h2v2h-2zM1142 628h2v2h-2zM1142 652h2v2h-2z" fill="#ff4040"/>
          <path d="M1029 631h2v2h-2zM1029 636h2v2h-2zM1029 641h2v2h-2zM1029 646h2v2h-2zM1142 648h2v2h-2z" fill="#4040ff"/>
          <path d="M1142 594h2v2h-2zM1142 599h2v2h-2zM1142 604h2v2h-2zM1142 633h2v2h-2zM1142 638h2v2h-2zM1142 643h2v2h-2zM1142 657h2v2h-2zM1029 651h2v2h-2zM1027 600h2v2h-2z" fill="#888"/>

          <!-- keypad -->
          <path d="M1342 585h69v89h-69z" fill="#c8c8aa" stroke="#800000"/>
          <g class="key"><circle cx="1357" cy="600" r="7"/><circle cx="1377" cy="600" r="7"/><circle cx="1396" cy="600" r="7"/><circle cx="1357" cy="620" r="7"/><circle cx="1377" cy="620" r="7"/><circle cx="1396" cy="620" r="7"/><circle cx="1357" cy="639" r="7"/><circle cx="1377" cy="639" r="7"/><circle cx="1396" cy="639" r="7"/><circle cx="1357" cy="659" r="7"/><circle cx="1377" cy="659" r="7"/><circle cx="1396" cy="659" r="7"/></g>
          <g class="cap"><text x="1357" y="604">1</text><text x="1377" y="604">2</text><text x="1396" y="604">3</text><text x="1357" y="624">4</text><text x="1377" y="624">5</text><text x="1396" y="624">6</text><text x="1357" y="643">7</text><text x="1377" y="643">8</text><text x="1396" y="643">9</text><text x="1377" y="663">0</text><text x="1396" y="663">#</text></g>
          <path d="M1353 659h8M1357 655v8M1354 656l6 6M1360 656l-6 6" stroke="#000"/>
          <g class="num"><text x="1345" y="602">A</text><text x="1345" y="622">B</text><text x="1345" y="641">C</text><text x="1345" y="661">D</text><text x="1356" y="591">1</text><text x="1376" y="591">2</text><text x="1395" y="591">3</text></g>
          <path d="M1336 596h3v3h-3zM1336 615h3v3h-3zM1336 635h3v3h-3zM1336 655h3v3h-3z" fill="#ff4040"/><path d="M1353 579h3v3h-3zM1373 579h2v3h-2zM1393 579h2v3h-2z" fill="#888"/>
        </g>
      </svg>
    </section>
  </main>

  <footer class="status">
    <div class="group anim">
      <button aria-label="Play"><svg viewBox="0 0 32 32"><path d="M1 1l30 15L1 31z" fill="url(#g-grn)" stroke="#777"/></svg></button>
      <button aria-label="Step"><svg viewBox="0 0 32 32"><path d="M1 1h4v30H1zM10 1l21 15-21 15z" fill="url(#g-blue)" stroke="#668"/></svg></button>
      <button aria-label="Pause"><svg viewBox="0 0 32 32"><path d="M5 1h8v30H5zM18 1h8v30h-8z" fill="url(#g-blue)" stroke="#668"/></svg></button>
      <button aria-label="Stop"><svg viewBox="0 0 32 32"><path d="M1 1h30v30H1z" fill="url(#g-blue)" stroke="#668"/></svg></button>
      <i class="sep"></i>
      <svg class="warn" viewBox="0 0 30 28"><path d="M15 1l14 25H1z" fill="url(#g-warn)" stroke="#e09000"/><path d="M15 7v11" stroke="#111" stroke-width="4"/><circle cx="15" cy="22" r="2"/></svg>
      <span>12 Message(...</span>
    </div>
    <div class="group load"><span>ANIMATING: 00:00:06.035322 (CPU load 81%)</span></div>
    <div class="group coord"><span>x:</span><span>+8200.0</span><span>y:</span><span>-5800.0</span><span class="unit">th</span></div>
  </footer>

  <div class="taskbar">
    <div class="weather"><button aria-label="Weather"><svg viewBox="0 0 40 40"><path d="M8 36a7 7 0 0 1 0-14C9 13 25 8 30 20c9 1 9 16 0 16z" fill="#b5cdf5"/><path d="M8 36a7 7 0 0 1-6-8c8 5 20 3 34 0 0 5-3 8-7 8z" fill="#86a8ea"/></svg><b>1</b></button></div>
    <div class="apps">
      <button aria-label="Start"><svg viewBox="0 0 36 36" fill="#4cc2f8"><path d="M1 1h16v16H1zM19 1h16v16H19zM1 19h16v16H1zM19 19h16v16H19z"/></svg></button>
      <button aria-label="Search"><svg viewBox="0 0 36 36"><path d="M24 25l8 9" stroke="#ccc" stroke-width="4" stroke-linecap="round"/><circle cx="16" cy="15" r="13" fill="#3a4452" stroke="#e8e8e8" stroke-width="3"/></svg></button>
      <button aria-label="Task view"><svg viewBox="0 0 36 36"><path d="M1 10h26v24H1z" fill="#575757"/><path d="M10 1h25v24H10z" fill="#f2f2f2"/><path d="M10 10h17v15H10z" fill="#aaa"/></svg></button>
      <button aria-label="Chat"><svg viewBox="0 0 36 36"><path d="M18 1a17 17 0 1 1-8 32l-9 2 2-9A17 17 0 0 1 18 1z" fill="#7465ca"/><path d="M9 11h13v14H9zM24 16l5-3v11l-5-3z" fill="#fff"/></svg></button>
      <button class="run" aria-label="Explorer"><svg viewBox="0 0 36 36"><path d="M1 3h11l3 4v10H1z" fill="#e09a10"/><path d="M1 7h34v28H1z" fill="#ffcf48"/><path d="M7 24q0-3 3-3h16q3 0 3 3v11H7z" fill="#1878d0"/><path d="M12 28h12" stroke="#0a4a90" stroke-width="2"/></svg></button>
      <button aria-label="myHP"><svg viewBox="0 0 36 36"><path d="M0 0h36v36H0z" fill="#0096d6"/><text x="18" y="22" class="my">my<tspan class="hp">hp</tspan></text></svg></button>
      <button aria-label="Edge"><svg viewBox="0 0 36 36"><circle cx="18" cy="18" r="17" fill="#1478d4"/><path d="M3 11C10-4 34-2 35 17c0 7-10 9-13 5 4-8-8-14-19-11z" fill="#3fcf90"/><path d="M3 11C8 0 20-1 28 5c-9-2-14 2-14 8-4-4-8-4-11-2z" fill="#34b8dc"/><path d="M15 14c-5 9 1 19 17 14-6 8-20 9-26 1-5-8 2-15 9-15z" fill="#0c4f9e"/></svg></button>
      <button aria-label="Store"><svg viewBox="0 0 36 36"><path d="M10 8V2h16v6" fill="none" stroke="#30a8f0" stroke-width="2"/><rect x="1" y="6" width="34" height="29" rx="3" fill="#f4f4f4"/><path d="M11 13h6v7h-6z" fill="#f25022"/><path d="M19 13h6v7h-6z" fill="#7fba00"/><path d="M11 22h6v6h-6z" fill="#00a4ef"/><path d="M19 22h6v6h-6z" fill="#ffb900"/></svg></button>
      <button class="note-dot" aria-label="Support"><svg viewBox="0 0 36 36"><circle cx="18" cy="18" r="16" fill="#0096d6" stroke="#fff" stroke-width="3"/><path d="M12 14q0-6 6-6t6 6q0 3-3 5-3 1-3 5" fill="none" stroke="#fff" stroke-width="4"/><circle cx="18" cy="28" r="2" fill="#fff"/></svg></button>
      <button class="run" aria-label="Chrome"><svg viewBox="0 0 36 36"><circle cx="18" cy="18" r="18" fill="#1ea446"/><path d="M2 9a18 18 0 0 1 32 0H18z" fill="#e33b2e"/><path d="M34 9a18 18 0 0 1-16 27l8-14V9z" fill="#fcc934"/><path d="M2 9l9 14 7-14z" fill="#e33b2e"/><circle cx="18" cy="18" r="9" fill="#fff"/><circle cx="18" cy="18" r="7" fill="#1a73e8"/></svg></button>
      <button class="run" aria-label="Arduino IDE"><svg viewBox="0 0 36 36"><use href="#i-arduino"/></svg></button>
      <button class="run active" aria-label="Proteus"><svg viewBox="0 0 32 32"><use href="#i-orbit"/></svg></button>
      <button class="run" aria-label="Arduino IDE 2"><svg viewBox="0 0 36 36"><use href="#i-arduino"/></svg></button>
      <button class="run" aria-label="Zoom"><svg viewBox="0 0 36 36"><rect width="36" height="36" rx="12" fill="#0b5cff"/><text x="18" y="21" class="zoom">zoom</text></svg></button>
    </div>
    <div class="tray">
      <svg class="chev" viewBox="0 0 18 18"><path d="M2 13l7-8 7 8"/></svg>
      <svg class="cloud" viewBox="0 0 26 24"><path d="M7 18a6 6 0 0 1 0-11c4-8 14-4 13 2v9z" fill="#bbb"/><circle cx="18" cy="16" r="7" fill="#fff"/><path d="M14 16a4 4 0 0 1 7-3M22 16a4 4 0 0 1-7 3" fill="none" stroke="#0a78d4" stroke-width="2"/></svg>
      <svg class="net" viewBox="0 0 24 24" fill="none" stroke="#fff" stroke-width="2"><path d="M1 9q11-10 22 0M5 13q7-7 14 0M8 17q4-4 8 0"/><circle cx="12" cy="20" r="1" fill="#fff"/></svg>
      <svg class="net" viewBox="0 0 24 24" fill="none" stroke="#fff" stroke-width="2"><path d="M1 9h4l5-5v16l-5-5H1zM13 9q2 3 0 6M16 6q4 6 0 12M19 3q6 9 0 18"/></svg>
      <svg class="net" viewBox="0 0 24 24"><rect x="1" y="5" width="19" height="14" rx="3" fill="none" stroke="#fff" stroke-width="2"/><path d="M4 8h9v8H4zM21 9q4 3 0 6z" fill="#fff"/></svg>
      <div class="clock"><span>22:28</span><span>04/03/2024</span></div>
      <svg class="bell" viewBox="0 0 20 24" fill="#8fe4ff"><path d="M10 1c5 0 7 4 7 8v6l2 4H1l2-4V9c0-4 2-8 7-8zM7 20h6q-3 5-6 0z"/></svg>
      <div class="copilot"><svg viewBox="0 0 34 34"><path d="M8 1h12q4 0 5 4l2 7h-8L13 27q-1 4-5 4H4q-5 0-3-8L5 5q1-4 3-4z" fill="#1c8cf0"/><path d="M2 15h10l-3 11q-1 4-4 4-5 0-4-7z" fill="#b8cc38"/><path d="M21 12h9q5 0 3 6l-4 14H16l3-16q0-4 2-4z" fill="#c860e0"/></svg><b>PRE</b></div>
    </div>
  </div>
</div>
</body>
</html>
```
FILE: styles.css
```css
* { box-sizing: border-box; }
body { margin: 0; font-family: "Open Sans", "Noto Sans", sans-serif; font-size: 16px; color: #000; }
button { margin: 0; padding: 0; border: 0; background: none; font: inherit; color: inherit; }
.defs { position: absolute; width: 0; height: 0; }
.app { display: flex; flex-direction: column; height: 100vh; overflow: hidden; background: #e3eaf2; }

.titlebar { display: flex; align-items: center; flex: none; height: 34px; padding-left: 2px; background: linear-gradient(90deg, #f9f0ef, #f2f0f8 35%, #f2f0f7 80%, #ecf3f8); }
.titlebar h1 { margin: 0 0 0 6px; font-size: 17px; font-weight: 400; line-height: 24px; white-space: nowrap; }
.logo { width: 23px; height: 24px; }
.winctl { display: flex; margin-left: auto; padding-right: 2px; }
.winctl button { width: 70px; height: 34px; }
.winctl svg { width: 16px; height: 16px; fill: none; stroke: #111; stroke-width: 1; }

.menubar { display: flex; flex: none; height: 30px; background: #fff; border-bottom: 2px solid #f0f0f0; }
.menubar button { padding: 0 12px; line-height: 32px; }

.toolbar { display: flex; flex: none; gap: 4px; height: 43px; background: linear-gradient(90deg, #e3eaf2 50%, #eaf2fa); }
.group { position: relative; display: flex; align-items: center; flex: none; padding: 0 3px 2px 11px; background: linear-gradient(#e8f4fa, #d7eaf5 45%, #b9daec 85%, #a9cadd); }
.group::before { content: ""; position: absolute; left: 4px; top: 2px; bottom: 2px; width: 2px; background: repeating-linear-gradient(#fff 0 2px, #a3b7c4 2px 4px); }
.toolbar button { display: grid; place-items: center; width: 41px; height: 39px; }
.toolbar button svg { width: 32px; height: 32px; }
.on { border: 1px solid #6a9fbd; background: linear-gradient(#b3d0e0, #e3f1f9); }
.group .sep { flex: none; width: 8px; height: 35px; border-left: 3px solid transparent; background: linear-gradient(90deg, #999 1px, #fff 1px 2px, transparent 2px); background-clip: padding-box; }
.dim { opacity: .6; }
.bill { font: 700 26px "Liberation Sans", sans-serif; fill: #8a8a00; text-anchor: middle; }
.code { font: 700 11px "Liberation Mono", monospace; fill: #0000e0; text-anchor: middle; }
.lbl { font: 14px "Noto Sans", sans-serif; fill: #1414c8; stroke: #1414c8; text-anchor: middle; }

.tabs { display: flex; align-items: flex-end; flex: none; height: 46px; padding-bottom: 6px; background: linear-gradient(#5f9dbd 0 1px, #b9dbec 1px, #a9cfe3) bottom / 100% 7px no-repeat, linear-gradient(90deg, #e3eaf2 50%, #eaf2fa); }
.slant { width: 26px; height: 35px; margin-bottom: -1px; }
.tab { display: flex; align-items: center; height: 35px; margin-bottom: -1px; padding: 0 14px 2px 1px; border: 1px solid #5f9dbd; border-width: 1px 1px 0 0; background: linear-gradient(#e3f1f9, #b9dbec); color: #1f4c73; font: 700 17px "Liberation Sans", sans-serif; }
.tab > svg { width: 24px; height: 24px; }
.tab span { margin: 0 15px 0 3px; }
.tab button svg { display: block; width: 15px; height: 15px; }

.work { display: flex; flex: 1; min-height: 0; }
.tools { position: relative; display: flex; flex-direction: column; flex: none; overflow: hidden; background: linear-gradient(90deg, #e8f4fa, #d7eaf5 45%, #b9daec 85%, #a9cadd); }
.tools::before { content: ""; position: absolute; left: 2px; right: 2px; top: 3px; height: 2px; background: repeating-linear-gradient(90deg, #fff 0 2px, #a3b7c4 2px 4px); }
.tools button { display: grid; place-items: center; flex: none; height: 39px; width: 41px; }
.tools svg { width: 31px; height: 31px; }
.tools .sep { flex: none; height: 4px; margin-left: 2px; background: linear-gradient(transparent 1px, #999 1px 2px, #fff 2px 3px, transparent 3px); }
.modes { width: 47px; padding: 10px 4px 0 2px; }
.tools .serif { font: 40px "Liberation Serif", serif; line-height: 39px; }
.orient { width: 46px; height: 202px; margin: 0 1px 0 2px; padding: 13px 2px 0; }
.orient input { width: 42px; height: 22px; margin: 0 0 2px; padding: 0; border: 0; background: #fff; font: 16px "Liberation Sans", sans-serif; }
.orient .sep { margin-left: 0; }

.side { display: flex; flex-direction: column; flex: none; gap: 4px; width: 121px; }
.overview { flex: none; height: 101px; border: 1px solid #666; background: #dfdfcf; overflow: hidden; }
.overview svg { display: block; width: 119px; height: 99px; }
.devices { display: flex; flex-direction: column; flex: 1; min-height: 0; border: 1px solid #666; background: #fff; outline: 1px solid #0078d7; outline-offset: -2px; }
.dev-head { display: flex; align-items: center; flex: none; gap: 10px; height: 34px; padding: 0 0 1px 3px; overflow: hidden; background: linear-gradient(#e8f4fa, #b0d0e3); font: 16px "Liberation Sans", sans-serif; }
.dev-head button { flex: none; width: 23px; height: 23px; border-radius: 4px; background: #0046e0; color: #fff; font-size: 20px; line-height: 23px; }
.dev-head span { display: flex; justify-content: flex-end; flex: none; width: 62px; margin-left: -6px; overflow: hidden; }
.devices ul { flex: 1; min-height: 0; margin: 0 1px; padding: 0; list-style: none; overflow: hidden; font: 16px "Liberation Sans", sans-serif; }
.devices li { height: 20px; padding-left: 2px; margin-right: 2px; line-height: 22px; white-space: nowrap; overflow: hidden; }
.devices .sel { background: #0078d7; color: #fff; margin-right: 0; }
.hscroll { display: flex; align-items: center; flex: none; height: 25px; margin: 0 1px 1px; padding-left: 26px; background: #f0f0f0; }
.hscroll i { width: 55px; height: 11px; background: #878787; }

.sheet { flex: 1; min-width: 0; margin: 0 3px 0 4px; border: 1px solid #666; background: #dfdfcf; }
.sheet > svg { display: block; shape-rendering: crispEdges; }
.sheet circle { shape-rendering: auto; }
.frame { fill: none; stroke: #0000b0; }
.wire { fill: none; stroke: #004000; }
.pin { fill: none; stroke: #900000; }
.sheet text { font-family: "Liberation Sans", Arial, sans-serif; }
.ttl { font-size: 20px; font-weight: 700; fill: #800000; }
.sub { font-size: 12px; font-weight: 700; fill: #800000; }
.note { font-size: 12px; fill: #800000; }
.ref { font-size: 6px; fill: #222; }
.val { font-size: 4px; fill: #222; }
.site { font-size: 6px; font-weight: 700; fill: #fff; }
.board { font-size: 9px; font-weight: 700; fill: #fff; }
.one { font-size: 9px; fill: #fff; }
.tiny { font-size: 3px; font-weight: 700; fill: #fff; }
.end { text-anchor: end; }
.num { font-size: 4px; fill: #555; }
.key { fill: #c0c0c4; stroke: #000; }
.cap { font-size: 10px; font-weight: 700; text-anchor: middle; }

.status { display: flex; flex: none; gap: 5px; height: 43px; margin-top: 2px; }
.status .group { white-space: nowrap; }
.anim { width: 377px; }
.anim button { display: grid; place-items: center; flex: none; width: 52px; height: 39px; }
.anim button svg { width: 32px; height: 32px; }
.anim .warn { flex: none; width: 30px; height: 28px; margin: 0 6px 0 8px; }
.load { width: 412px; color: #004000; }
.status .load, .status .coord { padding-left: 13px; }
.status .coord { flex: 1; }
.coord span { margin-right: 10px; }
.coord span:nth-child(odd) { width: 25px; }
.status .coord .unit { width: 14px; margin: 0 0 0 auto; color: #000080; }

.taskbar { display: flex; flex: none; height: 72px; border-top: 2px solid #454851; background: linear-gradient(90deg, #1b202b, #162438 30%, #182538 55%, #1b202b 75%, #1d202a); color: #fff; }
.weather { flex: 0 0 24%; padding: 10px 0 0 29px; }
.weather button { position: relative; width: 40px; height: 44px; }
.weather svg { width: 38px; height: 38px; margin-top: 2px; }
.weather b { position: absolute; right: -4px; top: -1px; width: 23px; height: 23px; border-radius: 12px; background: #c42b1c; font-size: 14px; font-weight: 400; line-height: 23px; }
.apps { display: flex; flex: none; }
.apps button { position: relative; display: grid; place-items: center; width: 66px; height: 68px; }
.apps svg { width: 36px; height: 36px; }
.run::after { content: ""; position: absolute; left: 29px; bottom: 5px; width: 8px; height: 5px; border-radius: 2px; background: #9a9da4; }
.active::before { content: ""; position: absolute; left: 4px; top: 4px; right: 4px; bottom: 4px; border: 1px solid #363f4d; border-radius: 6px; background: #283242; }
.active svg { position: relative; }
.active::after { left: 21px; width: 24px; background: #4cc2ff; }
.note-dot::before { content: ""; position: absolute; z-index: 1; left: 35px; top: 8px; width: 24px; height: 24px; border-radius: 12px; background: #ffb90f; }
.my { font: 12px "Open Sans", sans-serif; fill: #fff; text-anchor: middle; }
.hp { font-weight: 700; font-style: italic; }
.zoom { font: 600 11px "Open Sans", sans-serif; fill: #fff; text-anchor: middle; }
.tray { display: flex; align-items: center; margin-left: auto; padding: 0 28px 2px 0; }
.chev { width: 18px; height: 18px; margin-right: 27px; fill: none; stroke: #fff; stroke-width: 2; }
.cloud { width: 26px; height: 24px; margin-right: 22px; }
.net { width: 24px; height: 24px; margin-right: 12px; }
.clock { display: flex; flex-direction: column; align-items: flex-end; margin: 0 14px 0 13px; font-size: 17px; line-height: 24px; }
.bell { width: 20px; height: 24px; }
.copilot { position: relative; width: 38px; height: 36px; margin-left: 25px; }
.copilot svg { width: 34px; height: 34px; }
.copilot b { position: absolute; right: 0; bottom: 0; padding: 0 3px; border-radius: 2px; background: #ffc20e; color: #222; font-size: 11px; line-height: 13px; }
```
